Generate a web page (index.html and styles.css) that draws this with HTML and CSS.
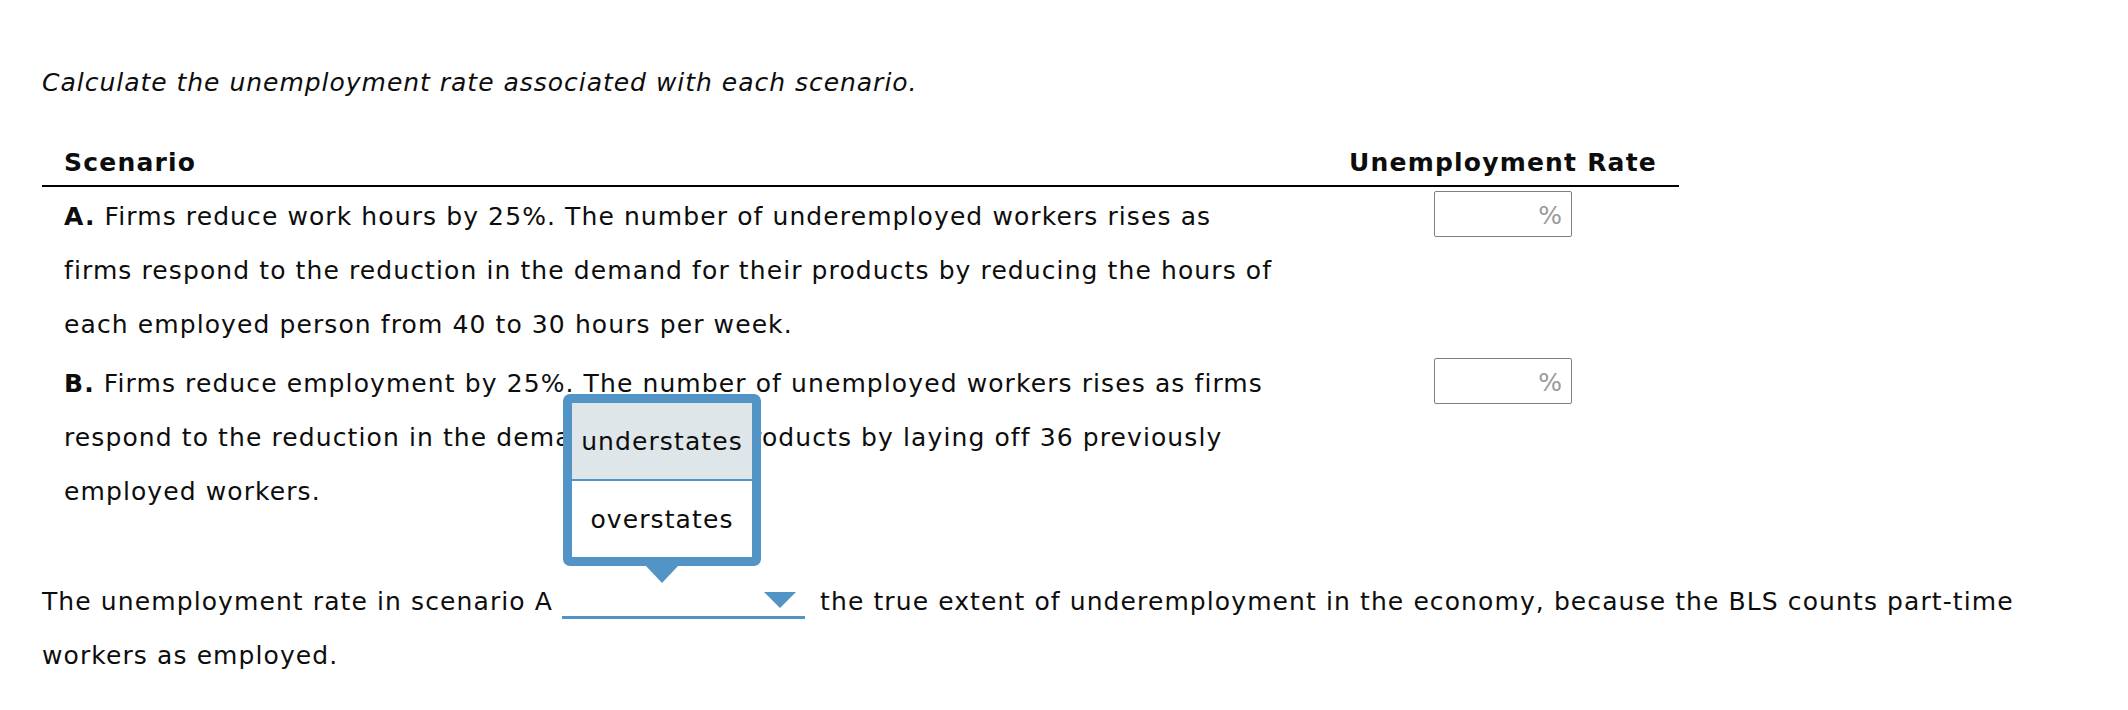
FILE: index.html
```html
<!DOCTYPE html>
<html lang="en">
<head>
<meta charset="utf-8">
<title>Unemployment rate scenarios</title>
<link rel="stylesheet" href="styles.css">
</head>
<body>
<div class="question">
  <p class="prompt">Calculate the unemployment rate associated with each scenario.</p>

  <table class="scenarios">
    <thead>
      <tr>
        <th class="col-scenario">Scenario</th>
        <th class="col-rate">Unemployment Rate</th>
      </tr>
    </thead>
    <tbody>
      <tr class="row-a">
        <td class="scenario-text"><b>A.</b> Firms reduce work hours by 25%. The number of underemployed workers rises as firms respond to the reduction in the demand for their products by reducing the hours of each employed person from 40 to 30 hours per week.</td>
        <td class="rate-cell"><span class="rate-input"><span class="unit">%</span></span></td>
      </tr>
      <tr class="row-b">
        <td class="scenario-text"><b>B.</b> Firms reduce employment by 25%. The number of unemployed workers rises as firms respond to the reduction in the demand for their products by laying off 36 previously employed workers.</td>
        <td class="rate-cell"><span class="rate-input"><span class="unit">%</span></span></td>
      </tr>
    </tbody>
  </table>

  <p class="statement">The unemployment rate in scenario A <span class="dropdown"><svg class="caret" width="32" height="16" viewBox="0 0 32 16"><polygon points="0,0 32,0 16,16" fill="#5394c7"/></svg><span class="menu"><span class="option is-hover">understates</span><span class="option">overstates</span></span></span> the true extent of underemployment in the economy, because the BLS counts part-time workers as employed.</p>
</div>
</body>
</html>
```

FILE: styles.css
```css
html, body {
  margin: 0;
  padding: 0;
  background: #ffffff;
}

body {
  font-family: "DejaVu Sans", Verdana, sans-serif;
  font-size: 25px;
  letter-spacing: 1.1px;
  color: #0d0d0d;
}

.question {
  padding: 56px 42px 0 42px;
}

.prompt {
  margin: 0;
  line-height: 54px;
  font-style: italic;
  letter-spacing: 0.98px;
}

/* scenario table */
.scenarios {
  width: 1637px;
  margin-top: 31px;
  border-collapse: collapse;
}

.scenarios th {
  padding: 8px 22px;
  line-height: 28px;
  font-weight: bold;
  letter-spacing: 1.2px;
  border-bottom: 2px solid #000000;
  white-space: nowrap;
}

.col-scenario {
  text-align: left;
}

.col-rate {
  width: 1px;
  text-align: right;
}

.scenarios td {
  vertical-align: top;
  line-height: 54px;
}

.scenario-text {
  padding: 3px 51px 2px 22px;
}

.rate-cell {
  padding: 3px 22px 2px;
}

.rate-input {
  display: block;
  width: 127px;
  height: 44px;
  margin: 1px auto 0;
  padding: 0 9px 0 0;
  border: 1px solid #7f7f7f;
  border-radius: 2px;
  line-height: 47px;
  text-align: right;
  letter-spacing: 0;
  color: #9a9a9a;
}

/* sentence with the inline select */
.statement {
  margin: 54px 0 0;
  line-height: 54px;
}

.dropdown {
  position: relative;
  display: inline-block;
  width: 243px;
  border-bottom: 3px solid #5394c7;
  vertical-align: -9px;
  margin-right: 6px;
}

.caret {
  display: block;
  margin: 0 9px 8px auto;
}

.menu {
  position: absolute;
  left: 1px;
  bottom: 50px;
  width: 180px;
  border: 9px solid #5394c7;
  border-radius: 7px;
  background: #ffffff;
  display: flex;
  flex-direction: column;
}

.menu::after {
  content: "";
  position: absolute;
  top: calc(100% + 9px);
  left: 50%;
  transform: translateX(-50%);
  border-style: solid;
  border-width: 17px 16px 0;
  border-color: #5394c7 transparent transparent;
}

.option {
  display: block;
  height: 76px;
  line-height: 78px;
  text-align: center;
  color: #0d0d0d;
}

.option + .option {
  border-top: 2px solid #5394c7;
}

.option.is-hover {
  background: #dfe6e9;
}
```
